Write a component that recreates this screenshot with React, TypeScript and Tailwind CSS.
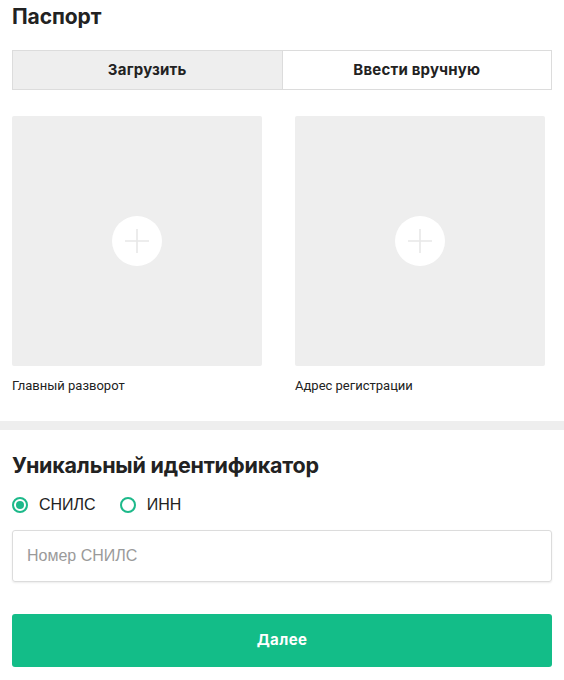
import React, { useState } from "react";

function PlusTile({ label }: { label: string }) {
	return (
		<div className="flex w-[250px] flex-col">
			<button
				type="button"
				className="flex h-[250px] w-[250px] items-center justify-center rounded-[2px] bg-[#eeeeee]"
			>
				<span className="flex h-[50px] w-[50px] items-center justify-center rounded-full bg-white">
					<svg width="26" height="26" viewBox="0 0 26 26" fill="none">
						<path d="M13 1v24M1 13h24" stroke="#e8e8e8" strokeWidth="1.6" />
					</svg>
				</span>
			</button>
			<span className="mt-[12px] font-['Roboto',sans-serif] text-[13px] leading-[16px] text-[#222]">
				{label}
			</span>
		</div>
	);
}

function Radio({
	checked,
	label,
	onClick,
}: {
	checked: boolean;
	label: string;
	onClick: () => void;
}) {
	return (
		<button type="button" onClick={onClick} className="flex items-center gap-[11px]">
			<span className="flex h-[16px] w-[16px] items-center justify-center rounded-full border-2 border-[#1db98a]">
				{checked && <span className="h-[8px] w-[8px] rounded-full bg-[#1db98a]" />}
			</span>
			<span className="font-['Liberation_Sans',Arial,sans-serif] text-[16px] leading-[18px] text-[#222]">
				{label}
			</span>
		</button>
	);
}

export default function App() {
	const [tab, setTab] = useState<"upload" | "manual">("upload");
	const [idType, setIdType] = useState<"snils" | "inn">("snils");

	return (
		<div className="w-[564px] bg-white font-['Inter',sans-serif] text-[#222]">
			<section className="px-3 pb-[27px]">
				<h1 className="pt-[4px] text-[21px] font-bold leading-[26px] tracking-[-0.1px]">Паспорт</h1>

				<div className="mt-[20px] flex h-[40px] border border-[#dcdcdc]">
					<button
						type="button"
						onClick={() => setTab("upload")}
						className={`flex-1 border-r border-[#dcdcdc] text-[15px] font-bold tracking-[0.2px] ${tab === "upload" ? "bg-[#eeeeee]" : "bg-white"}`}
					>
						Загрузить
					</button>
					<button
						type="button"
						onClick={() => setTab("manual")}
						className={`flex-1 text-[15px] font-bold tracking-[0.2px] ${tab === "manual" ? "bg-[#eeeeee]" : "bg-white"}`}
					>
						Ввести вручную
					</button>
				</div>

				<div className="mt-[26px] flex gap-[33px]">
					<PlusTile label="Главный разворот" />
					<PlusTile label="Адрес регистрации" />
				</div>
			</section>

			<div className="h-[9px] bg-[#eeeeee]" />

			<section className="px-3 pb-[14px]">
				<h2 className="pt-[22px] text-[21.5px] font-bold leading-[26px] tracking-[-0.2px]">
					Уникальный идентификатор
				</h2>

				<div className="mt-[18px] flex items-center gap-[24px]">
					<Radio checked={idType === "snils"} label="СНИЛС" onClick={() => setIdType("snils")} />
					<Radio checked={idType === "inn"} label="ИНН" onClick={() => setIdType("inn")} />
				</div>

				<input
					className="mt-[16px] h-[52px] w-full rounded-[3px] border border-[#dcdcdc] px-[14px] font-['Liberation_Sans',Arial,sans-serif] text-[16px] shadow-[0_1px_2px_rgba(0,0,0,0.08)] outline-none placeholder:text-[#9a9a9a]"
					placeholder={idType === "snils" ? "Номер СНИЛС" : "Номер ИНН"}
				/>

				<button
					type="button"
					className="mt-[32px] h-[53px] w-full rounded-[3px] bg-[#13bd88] text-[15px] font-bold tracking-[0.4px] text-white"
				>
					Далее
				</button>
			</section>
		</div>
	);
}
